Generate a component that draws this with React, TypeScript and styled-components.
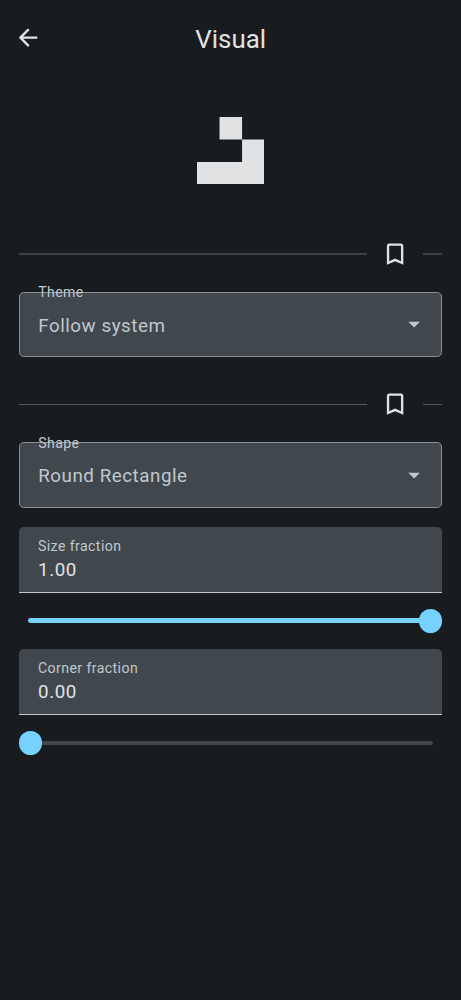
import React from "react";
import styled, { createGlobalStyle } from "styled-components";

const c = {
  bg: "#191c1e",
  surface: "#41484d",
  outline: "#8b9297",
  text: "#e1e2e4",
  muted: "#c0c7cd",
  primary: "#76d1ff",
};

const GlobalStyle = createGlobalStyle`
  * { box-sizing: border-box; }
  body {
    margin: 0;
    background: ${c.bg};
    color: ${c.text};
    font-family: Roboto, sans-serif;
  }
`;

const Screen = styled.main`
  display: flex;
  flex-direction: column;
  min-height: 1000px;
  padding: 0 18.8px;
  background: ${c.bg};
`;

const TopBar = styled.header`
  display: grid;
  grid-template-columns: 28.2px 1fr 28.2px;
  align-items: center;
  height: 75.4px;
  margin-left: -4.7px;
  margin-right: -4.7px;
`;

const BackButton = styled.button`
  display: flex;
  padding: 0;
  border: 0;
  background: none;
  color: ${c.text};
`;

const Title = styled.h1`
  margin: 0;
  padding: 3px 0 0 0.4px;
  font-size: 25.9px;
  font-weight: 400;
  line-height: 33px;
  text-align: center;
`;

const Preview = styled.div`
  display: flex;
  align-items: center;
  justify-content: center;
  height: 150.4px;
`;

const SectionHeader = styled.div`
  display: flex;
  align-items: center;
  height: 56.4px;
`;

const Rule = styled.span<{ $short?: boolean; $soft?: boolean }>`
  flex: ${(p) => (p.$short ? "0 0 18.8px" : "1")};
  height: ${(p) => (p.$soft ? "2px" : "1px")};
  background: ${(p) => (p.$soft ? "#3c4143" : "#565b5e")};
`;

const BookmarkButton = styled.button`
  display: flex;
  align-items: center;
  justify-content: center;
  width: 56.4px;
  height: 56.4px;
  padding: 0;
  border: 0;
  background: none;
  color: ${c.text};
`;

const SelectBox = styled.div`
  position: relative;
  display: flex;
  align-items: center;
  justify-content: space-between;
  height: 65.9px;
  margin: 9.4px 0 18.8px;
  padding: 2.5px 13px 0 18.4px;
  border: 1.2px solid ${c.outline};
  border-radius: 4.7px;
  background: ${c.surface};
  color: ${c.muted};
`;

const FloatingLabel = styled.span`
  position: absolute;
  top: -9.2px;
  left: 18.4px;
  font-size: 14.1px;
  line-height: 18.8px;
  letter-spacing: 0.42px;
`;

const SelectValue = styled.span`
  font-size: 18.8px;
  line-height: 28px;
  letter-spacing: 0.53px;
`;

const DropIcon = styled.svg`
  margin-top: -2.8px;
`;

const Field = styled.label`
  display: flex;
  flex-direction: column;
  height: 65.9px;
  padding: 10px 19.2px 0;
  border-bottom: 1.2px solid ${c.muted};
  border-radius: 4.7px 4.7px 0 0;
  background: ${c.surface};
`;

const FieldLabel = styled.span`
  color: ${c.muted};
  font-size: 14.1px;
  line-height: 19px;
  letter-spacing: 0.42px;
`;

const FieldValue = styled.span`
  font-size: 18.8px;
  line-height: 29.6px;
  letter-spacing: 0.59px;
`;

const SliderRow = styled.div`
  display: flex;
  align-items: center;
  height: 56.3px;
  padding: 0 9.4px;
`;

const Track = styled.div<{ $full: boolean }>`
  display: flex;
  align-items: center;
  justify-content: ${(p) => (p.$full ? "flex-end" : "flex-start")};
  flex: 1;
  height: 4.7px;
  border-radius: 2.4px;
  background: ${(p) => (p.$full ? c.primary : c.surface)};
`;

const Thumb = styled.span`
  flex: none;
  width: 23.5px;
  height: 23.5px;
  margin: 0 -9.4px;
  border-radius: 50%;
  background: ${c.primary};
`;

const Section = ({ soft }: { soft?: boolean }) => (
  <SectionHeader>
    <Rule $soft={soft} />
    <BookmarkButton aria-label="Bookmark">
      <svg width="28.2" height="28.2" viewBox="0 0 24 24" fill="currentColor">
        <path d="M17 3H7c-1.1 0-2 .9-2 2v16l7-3 7 3V5c0-1.1-.9-2-2-2zm0 15-5-2.18L7 18V5h10v13z" />
      </svg>
    </BookmarkButton>
    <Rule $short $soft={soft} />
  </SectionHeader>
);

const Select = ({ label, value }: { label: string; value: string }) => (
  <SelectBox>
    <FloatingLabel>{label}</FloatingLabel>
    <SelectValue>{value}</SelectValue>
    <DropIcon width="28.2" height="28.2" viewBox="0 0 24 24" fill="currentColor">
      <path d="M7 10l5 5 5-5z" />
    </DropIcon>
  </SelectBox>
);

const NumberField = ({ label, value }: { label: string; value: number }) => (
  <>
    <Field>
      <FieldLabel>{label}</FieldLabel>
      <FieldValue>{value.toFixed(2)}</FieldValue>
    </Field>
    <SliderRow>
      <Track $full={value === 1}>
        <Thumb />
      </Track>
    </SliderRow>
  </>
);

export default function App() {
  return (
    <Screen>
      <GlobalStyle />
      <TopBar>
        <BackButton aria-label="Back">
          <svg width="28.2" height="28.2" viewBox="0 0.35 24 24" fill="currentColor">
            <path d="M19 11H7.83l4.88-4.88c.39-.39.39-1.03 0-1.42a.996.996 0 0 0-1.41 0l-6.59 6.59a.996.996 0 0 0 0 1.41l6.59 6.59a.996.996 0 1 0 1.41-1.41L7.83 13H19c.55 0 1-.45 1-1s-.45-1-1-1z" />
          </svg>
        </BackButton>
        <Title>Visual</Title>
      </TopBar>
      <Preview>
        <svg width="67.6" height="67.6" viewBox="0 0 3 3" fill={c.text}>
          <path d="M1 0h1v1H1zM2 1h1v2H0V2h2z" />
        </svg>
      </Preview>
      <Section soft />
      <Select label="Theme" value="Follow system" />
      <Section />
      <Select label="Shape" value="Round Rectangle" />
      <NumberField label="Size fraction" value={1} />
      <NumberField label="Corner fraction" value={0} />
    </Screen>
  );
}
